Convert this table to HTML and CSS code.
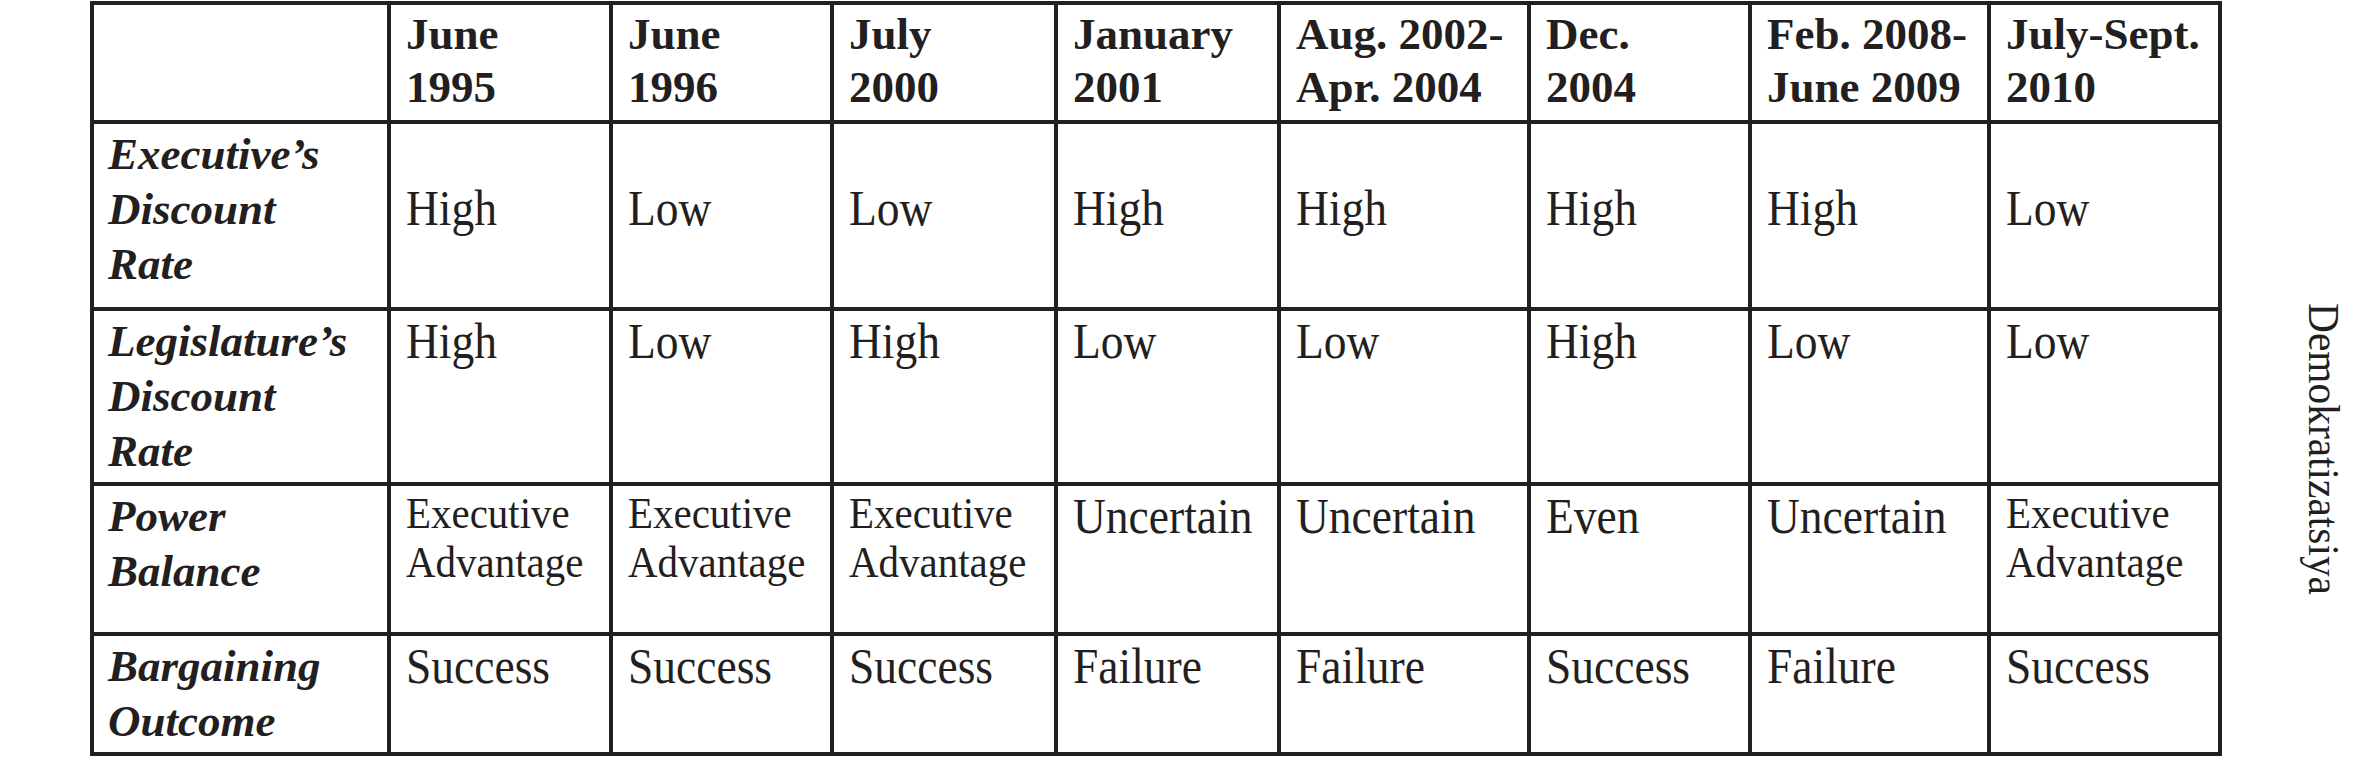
FILE: index.html
```html
<!DOCTYPE html>
<html lang="en">
<head>
<meta charset="utf-8">
<title>Bargaining outcomes</title>
<link rel="stylesheet" href="styles.css">
</head>
<body>
<div class="page">
  <div class="grid" role="table">
    <div class="cell head"></div>
    <div class="cell head">June<br>1995</div>
    <div class="cell head">June<br>1996</div>
    <div class="cell head">July<br>2000</div>
    <div class="cell head">January<br>2001</div>
    <div class="cell head">Aug. 2002-<br>Apr. 2004</div>
    <div class="cell head">Dec.<br>2004</div>
    <div class="cell head">Feb. 2008-<br>June 2009</div>
    <div class="cell head">July-Sept.<br>2010</div>

    <div class="cell label">Executive’s<br>Discount<br>Rate</div>
    <div class="cell val mid"><span class="txt">High</span></div>
    <div class="cell val mid"><span class="txt">Low</span></div>
    <div class="cell val mid"><span class="txt">Low</span></div>
    <div class="cell val mid"><span class="txt">High</span></div>
    <div class="cell val mid"><span class="txt">High</span></div>
    <div class="cell val mid"><span class="txt">High</span></div>
    <div class="cell val mid"><span class="txt">High</span></div>
    <div class="cell val mid"><span class="txt">Low</span></div>

    <div class="cell label">Legislature’s<br>Discount<br>Rate</div>
    <div class="cell val"><span class="txt">High</span></div>
    <div class="cell val"><span class="txt">Low</span></div>
    <div class="cell val"><span class="txt">High</span></div>
    <div class="cell val"><span class="txt">Low</span></div>
    <div class="cell val"><span class="txt">Low</span></div>
    <div class="cell val"><span class="txt">High</span></div>
    <div class="cell val"><span class="txt">Low</span></div>
    <div class="cell val"><span class="txt">Low</span></div>

    <div class="cell label">Power<br>Balance</div>
    <div class="cell val small"><span class="txt">Executive<br>Advantage</span></div>
    <div class="cell val small"><span class="txt">Executive<br>Advantage</span></div>
    <div class="cell val small"><span class="txt">Executive<br>Advantage</span></div>
    <div class="cell val"><span class="txt">Uncertain</span></div>
    <div class="cell val"><span class="txt">Uncertain</span></div>
    <div class="cell val"><span class="txt">Even</span></div>
    <div class="cell val"><span class="txt">Uncertain</span></div>
    <div class="cell val small"><span class="txt">Executive<br>Advantage</span></div>

    <div class="cell label">Bargaining<br>Outcome</div>
    <div class="cell val"><span class="txt">Success</span></div>
    <div class="cell val"><span class="txt">Success</span></div>
    <div class="cell val"><span class="txt">Success</span></div>
    <div class="cell val"><span class="txt">Failure</span></div>
    <div class="cell val"><span class="txt">Failure</span></div>
    <div class="cell val"><span class="txt">Success</span></div>
    <div class="cell val"><span class="txt">Failure</span></div>
    <div class="cell val"><span class="txt">Success</span></div>
  </div>
  <div class="side">Demokratizatsiya</div>
</div>
</body>
</html>
```
FILE: styles.css
```css
html, body {
  margin: 0;
  padding: 0;
  background: #ffffff;
}

body {
  font-family: "Liberation Serif", "Times New Roman", serif;
  color: #231f20;
}

.page {
  display: flex;
  align-items: flex-start;
  padding: 1px 0 0 90px;
  width: 2360px;
  height: 761px;
  box-sizing: border-box;
  overflow: hidden;
}

.grid {
  display: grid;
  grid-template-columns: 293px 218px 217px 220px 219px 246px 217px 235px 227px;
  grid-template-rows: 115px 183px 171px 146px 116px;
  gap: 4px;
  padding: 4px;
  background: #231f20;
  flex: none;
}

.cell {
  background: #ffffff;
  padding: 3px 0 0 15px;
  font-size: 45px;
  line-height: 55px;
  white-space: nowrap;
}

.head {
  font-weight: bold;
  line-height: 53px;
}

.label {
  font-weight: bold;
  font-style: italic;
  padding-left: 14px;
}

.val {
  font-size: 50px;
  padding-top: 3px;
  padding-left: 15px;
}

.txt {
  display: inline-block;
  transform: scaleX(0.91);
  transform-origin: 0 0;
}

.val.mid {
  padding-top: 57px;
}

.val.small {
  font-size: 45px;
  line-height: 49px;
  padding-top: 3px;
}

.side {
  writing-mode: vertical-rl;
  font-size: 45px;
  line-height: 52px;
  margin: 302px 0 0 76px;
  transform: scaleY(0.92);
  transform-origin: 0 0;
  color: #231f20;
}
```
